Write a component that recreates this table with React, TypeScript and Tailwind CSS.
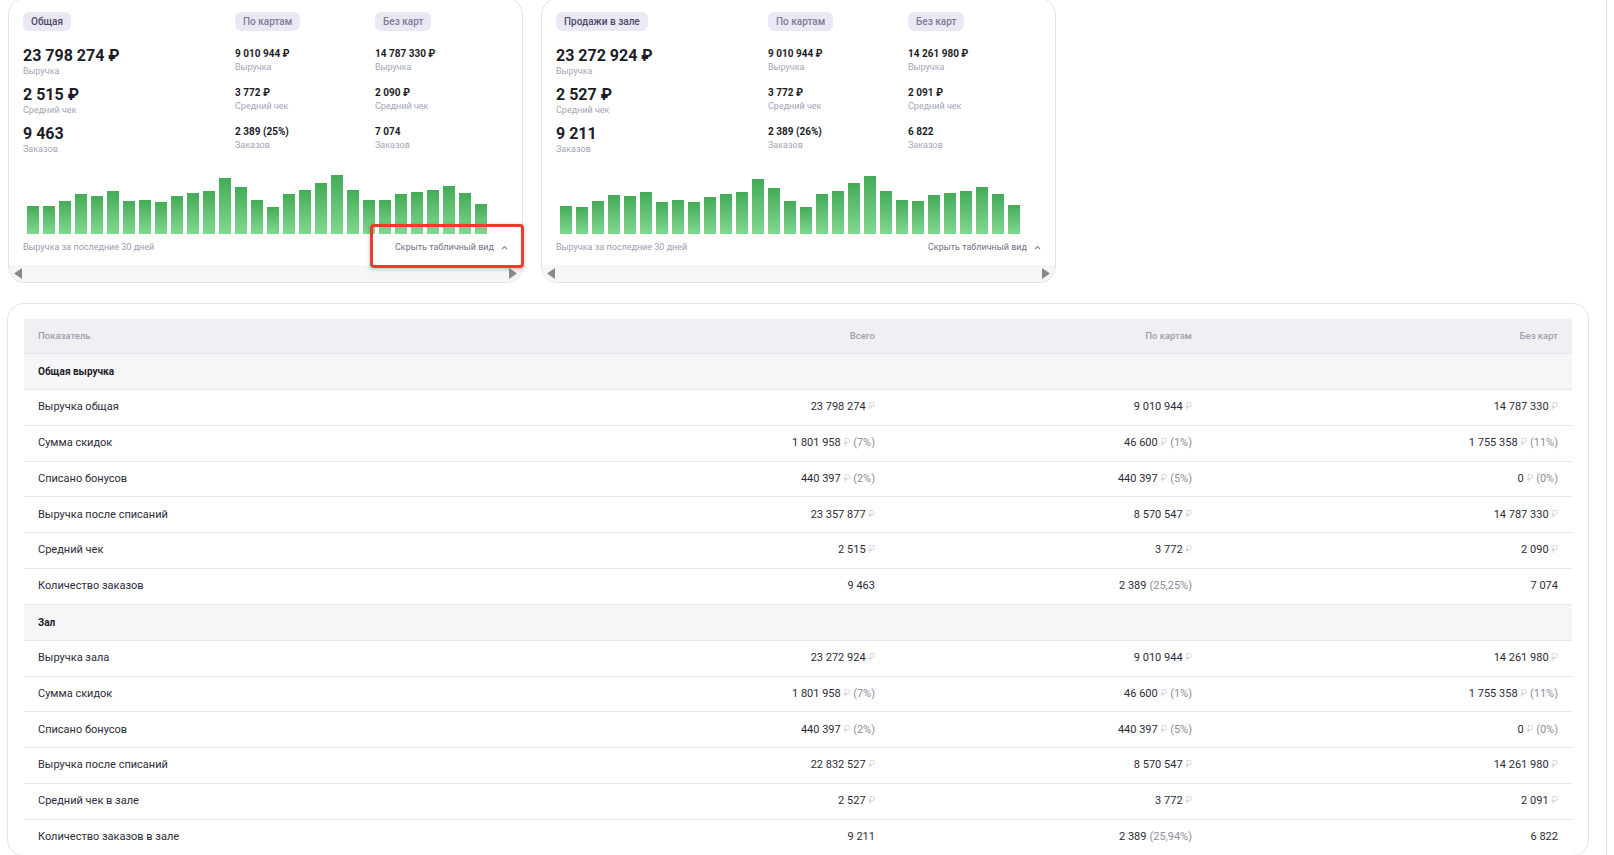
import React from 'react'

const FONT = { fontFamily: 'Roboto, "Noto Sans", sans-serif' }

const BARS_ALL = [28, 28, 33, 40, 38, 43, 33, 34, 32, 38, 41, 43, 56, 47, 34, 27, 40, 44, 51, 59, 44, 34, 34, 40, 42, 44, 48, 41, 30]
const BARS_HALL = [28, 27, 33, 39, 38, 42, 32, 34, 32, 37, 40, 42, 55, 46, 33, 27, 40, 43, 51, 58, 43, 34, 33, 39, 41, 43, 47, 40, 29]

type Stat = { value: string; label: string }

type CardData = {
  title: string
  main: Stat[]
  cards: Stat[]
  noCards: Stat[]
  bars: number[]
}

const CARDS: CardData[] = [
  {
    title: 'Общая',
    main: [
      { value: '23 798 274 ₽', label: 'Выручка' },
      { value: '2 515 ₽', label: 'Средний чек' },
      { value: '9 463', label: 'Заказов' }
    ],
    cards: [
      { value: '9 010 944 ₽', label: 'Выручка' },
      { value: '3 772 ₽', label: 'Средний чек' },
      { value: '2 389 (25%)', label: 'Заказов' }
    ],
    noCards: [
      { value: '14 787 330 ₽', label: 'Выручка' },
      { value: '2 090 ₽', label: 'Средний чек' },
      { value: '7 074', label: 'Заказов' }
    ],
    bars: BARS_ALL
  },
  {
    title: 'Продажи в зале',
    main: [
      { value: '23 272 924 ₽', label: 'Выручка' },
      { value: '2 527 ₽', label: 'Средний чек' },
      { value: '9 211', label: 'Заказов' }
    ],
    cards: [
      { value: '9 010 944 ₽', label: 'Выручка' },
      { value: '3 772 ₽', label: 'Средний чек' },
      { value: '2 389 (26%)', label: 'Заказов' }
    ],
    noCards: [
      { value: '14 261 980 ₽', label: 'Выручка' },
      { value: '2 091 ₽', label: 'Средний чек' },
      { value: '6 822', label: 'Заказов' }
    ],
    bars: BARS_HALL
  }
]

// v = number, p = share in brackets, r = show the ruble sign
type Cell = { v: string; p?: string; r?: boolean }
type Row = { label: string; section?: boolean; cells?: Cell[] }

const ROWS: Row[] = [
  { label: 'Общая выручка', section: true },
  { label: 'Выручка общая', cells: [{ v: '23 798 274', r: true }, { v: '9 010 944', r: true }, { v: '14 787 330', r: true }] },
  { label: 'Сумма скидок', cells: [{ v: '1 801 958', r: true, p: '(7%)' }, { v: '46 600', r: true, p: '(1%)' }, { v: '1 755 358', r: true, p: '(11%)' }] },
  { label: 'Списано бонусов', cells: [{ v: '440 397', r: true, p: '(2%)' }, { v: '440 397', r: true, p: '(5%)' }, { v: '0', r: true, p: '(0%)' }] },
  { label: 'Выручка после списаний', cells: [{ v: '23 357 877', r: true }, { v: '8 570 547', r: true }, { v: '14 787 330', r: true }] },
  { label: 'Средний чек', cells: [{ v: '2 515', r: true }, { v: '3 772', r: true }, { v: '2 090', r: true }] },
  { label: 'Количество заказов', cells: [{ v: '9 463' }, { v: '2 389', p: '(25,25%)' }, { v: '7 074' }] },
  { label: 'Зал', section: true },
  { label: 'Выручка зала', cells: [{ v: '23 272 924', r: true }, { v: '9 010 944', r: true }, { v: '14 261 980', r: true }] },
  { label: 'Сумма скидок', cells: [{ v: '1 801 958', r: true, p: '(7%)' }, { v: '46 600', r: true, p: '(1%)' }, { v: '1 755 358', r: true, p: '(11%)' }] },
  { label: 'Списано бонусов', cells: [{ v: '440 397', r: true, p: '(2%)' }, { v: '440 397', r: true, p: '(5%)' }, { v: '0', r: true, p: '(0%)' }] },
  { label: 'Выручка после списаний', cells: [{ v: '22 832 527', r: true }, { v: '8 570 547', r: true }, { v: '14 261 980', r: true }] },
  { label: 'Средний чек в зале', cells: [{ v: '2 527', r: true }, { v: '3 772', r: true }, { v: '2 091', r: true }] },
  { label: 'Количество заказов в зале', cells: [{ v: '9 211' }, { v: '2 389', p: '(25,94%)' }, { v: '6 822' }] }
]

function Badge({ text, active }: { text: string; active?: boolean }) {
  return (
    <div className="flex">
      <span
        className={`flex h-[19px] items-center rounded-[6px] bg-[#ebe8f6] px-[8px] text-[10px] font-medium leading-none ${
          active ? 'text-[#4d4866]' : 'text-[#807b96]'
        }`}
      >
        {text}
      </span>
    </div>
  )
}

function BigStat({ s }: { s: Stat }) {
  return (
    <div className="flex h-[38.75px] flex-col">
      <div className="text-[16px] font-bold leading-[18px] text-[#1d1d28]">{s.value}</div>
      <div className="text-[9px] leading-[12px] text-[#a3a6b6]">{s.label}</div>
    </div>
  )
}

function SmallStat({ s }: { s: Stat }) {
  return (
    <div className="flex h-[38.75px] flex-col">
      <div className="text-[10px] font-bold leading-[14px] text-[#1d1d28]">{s.value}</div>
      <div className="text-[9px] leading-[12px] text-[#a3a6b6]">{s.label}</div>
    </div>
  )
}

function SummaryCard({ data }: { data: CardData }) {
  return (
    <div className="w-[515px] overflow-hidden rounded-2xl border border-[#e3e3e8] bg-white">
      <div className="px-[14px] pt-[13px]">
        <div className="grid grid-cols-[212px_140px_1fr]">
          <Badge text={data.title} active />
          <Badge text="По картам" />
          <Badge text="Без карт" />
        </div>
        <div className="mt-[16px] grid grid-cols-[212px_140px_1fr]">
          <div>{data.main.map((s) => <BigStat key={s.label} s={s} />)}</div>
          <div>{data.cards.map((s) => <SmallStat key={s.label} s={s} />)}</div>
          <div>{data.noCards.map((s) => <SmallStat key={s.label} s={s} />)}</div>
        </div>
        <div className="mt-[10.75px] flex h-[60px] items-end gap-[4px] pl-[4px]">
          {data.bars.map((h, i) => (
            <div
              key={i}
              className="w-[12px] bg-linear-to-b from-[#43ab58] to-[#80d98f]"
              style={{ height: h }}
            />
          ))}
        </div>
        <div className="mb-[11px] mt-[6px] flex h-[14px] items-center justify-between text-[9px] leading-[14px]">
          <span className="text-[#9a9db0]">Выручка за последние 30 дней</span>
          <span className="flex items-center gap-[7px] text-[#6f7284]">
            Скрыть табличный вид
            <svg width="7" height="5" viewBox="0 0 7 5" fill="none">
              <path d="M1 4 L3.5 1.5 L6 4" stroke="#8e90a0" strokeWidth="1.2" />
            </svg>
          </span>
        </div>
      </div>
      <div className="flex h-[17px] items-center justify-between bg-[#f6f6f6] px-[5px]">
        <svg width="8" height="11" viewBox="0 0 8 11"><path d="M8 0 L0 5.5 L8 11 Z" fill="#8a8a8a" /></svg>
        <svg width="8" height="11" viewBox="0 0 8 11"><path d="M0 0 L8 5.5 L0 11 Z" fill="#8a8a8a" /></svg>
      </div>
    </div>
  )
}

function ValueCell({ c }: { c: Cell }) {
  return (
    <div className="pr-[13px] text-right">
      <span className="text-[#2c2c38]">{c.v}</span>
      {c.r && <span className="ml-[3px] text-[10px] font-light text-[#cfc6cf]">₽</span>}
      {c.p && <span className="ml-[3px] text-[#8f8d9b]">{c.p}</span>}
    </div>
  )
}

export default function App() {
  return (
    <div className="flex h-[855px] w-[1614px] overflow-hidden bg-white" style={FONT}>
      <div className="w-[1606px] shrink-0">
        <div className="-mt-[2px] flex gap-[18px] pl-[8px]">
          <div className="relative">
            <SummaryCard data={CARDS[0]} />
            <div className="absolute left-[362px] top-[226px] h-[44px] w-[154px] rounded-[4px] border-[3.5px] border-[#ef3a2c] shadow-[0_1px_4px_rgba(0,0,0,0.25)]" />
          </div>
          <SummaryCard data={CARDS[1]} />
        </div>

        <div className="ml-[7px] mt-[20px] w-[1582px] rounded-2xl border border-[#e4e4ea] px-[16px] pt-[15px]">
          <div className="grid h-[34px] grid-cols-[520px_344px_317px_366px] items-center bg-[#f0f0f4] text-[9.5px] font-medium text-[#9d9fae]">
            <div className="pl-[14px]">Показатель</div>
            <div className="pr-[13px] text-right">Всего</div>
            <div className="pr-[13px] text-right">По картам</div>
            <div className="pr-[13px] text-right">Без карт</div>
          </div>
          {ROWS.map((row, i) =>
            row.section ? (
              <div
                key={i}
                className="grid h-[35.85px] grid-cols-[520px_344px_317px_366px] items-center border-t border-[#e7e7ee] bg-[#f6f6f8]"
              >
                <div className="pl-[14px] text-[10px] font-bold text-[#1d1d28]">{row.label}</div>
              </div>
            ) : (
              <div
                key={i}
                className="grid h-[35.85px] grid-cols-[520px_344px_317px_366px] items-center border-t border-[#e7e7ee] text-[11px]"
              >
                <div className="pl-[14px] text-[#2c2c38]">{row.label}</div>
                {row.cells!.map((c, j) => (
                  <ValueCell key={j} c={c} />
                ))}
              </div>
            )
          )}
        </div>
      </div>
      <div className="flex-1 border-l border-[#e2e2e2]" />
    </div>
  )
}
